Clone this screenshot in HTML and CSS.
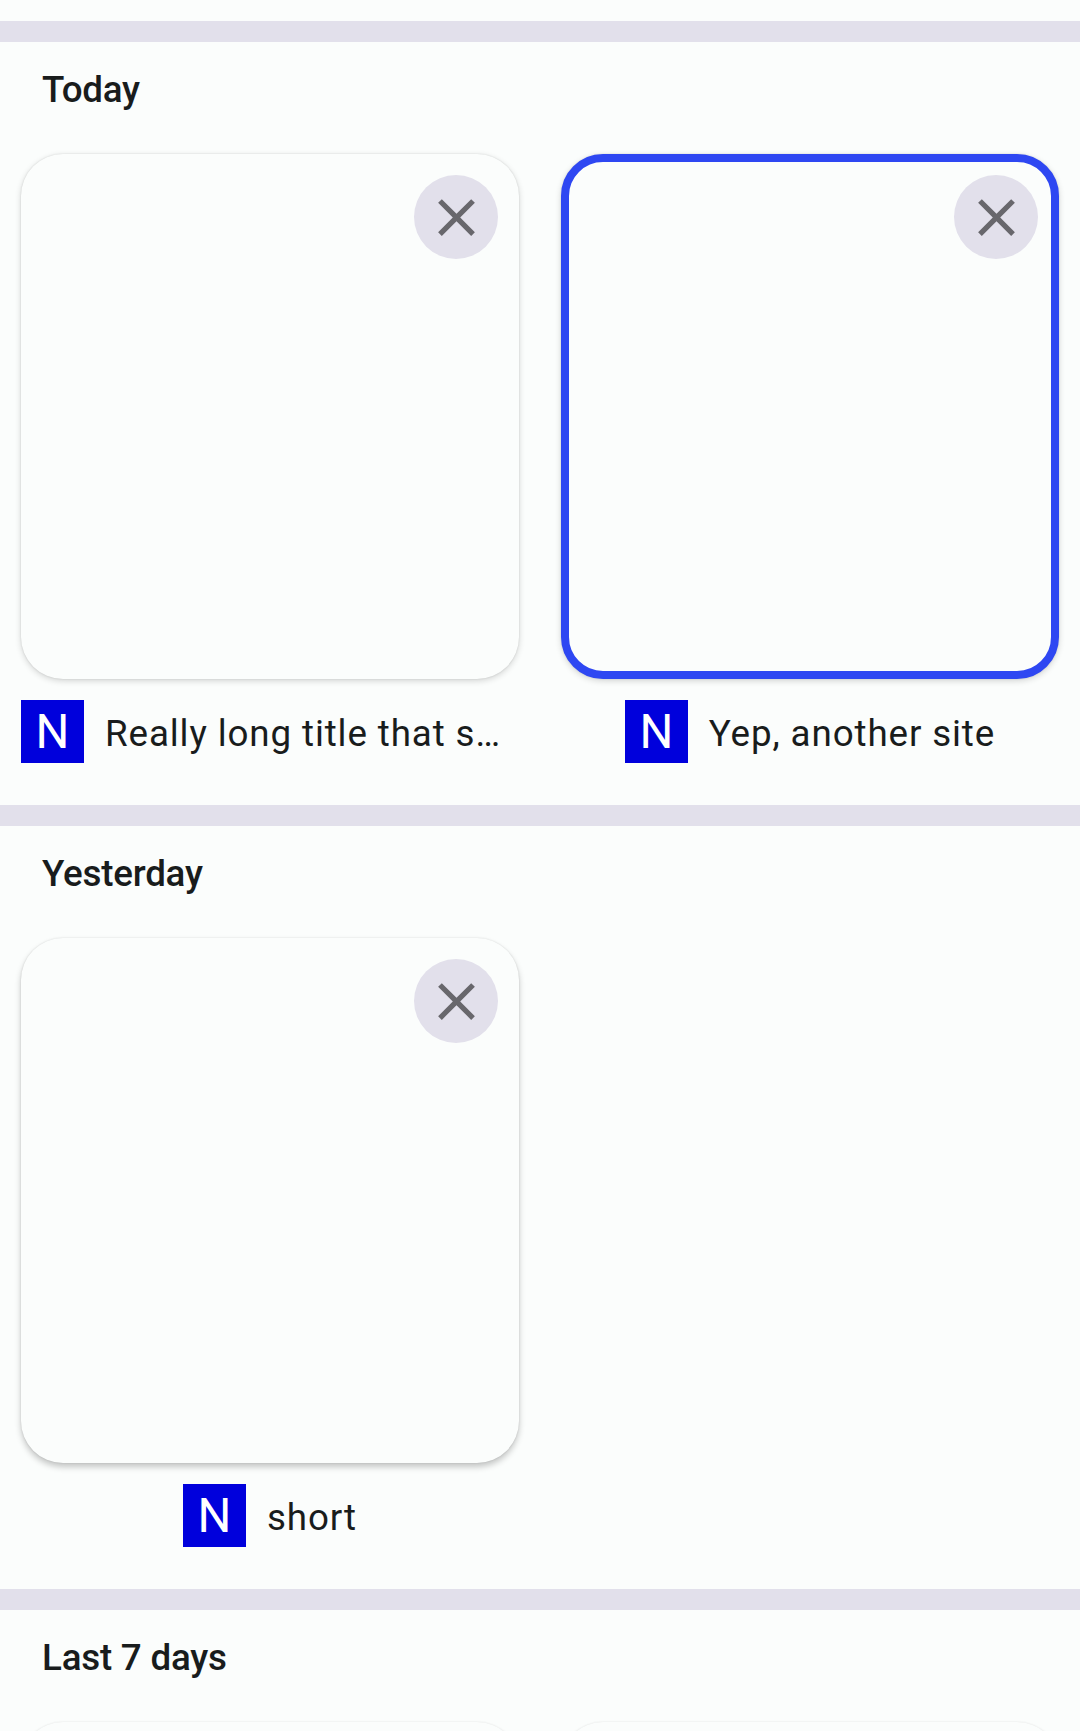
FILE: index.html
```html
<!DOCTYPE html>
<html lang="en">
<head>
<meta charset="utf-8">
<title>Tabs</title>
<link rel="stylesheet" href="styles.css">
</head>
<body>
<main class="tabs">
  <section class="group">
    <h2 class="heading">Today</h2>
    <div class="grid">
      <article class="tab">
        <div class="card"><button class="close" aria-label="Close"><svg viewBox="0 0 24 24"><path d="M19 6.41 17.59 5 12 10.59 6.41 5 5 6.41 10.59 12 5 17.59 6.41 19 12 13.41 17.59 19 19 17.59 13.41 12z"/></svg></button></div>
        <div class="caption"><span class="icon">N</span><span class="title title-full">Really long title that s…</span></div>
      </article>
      <article class="tab">
        <div class="card selected"><button class="close" aria-label="Close"><svg viewBox="0 0 24 24"><path d="M19 6.41 17.59 5 12 10.59 6.41 5 5 6.41 10.59 12 5 17.59 6.41 19 12 13.41 17.59 19 19 17.59 13.41 12z"/></svg></button></div>
        <div class="caption"><span class="icon">N</span><span class="title">Yep, another site</span></div>
      </article>
    </div>
  </section>
  <section class="group">
    <h2 class="heading">Yesterday</h2>
    <div class="grid">
      <article class="tab">
        <div class="card low"><button class="close" aria-label="Close"><svg viewBox="0 0 24 24"><path d="M19 6.41 17.59 5 12 10.59 6.41 5 5 6.41 10.59 12 5 17.59 6.41 19 12 13.41 17.59 19 19 17.59 13.41 12z"/></svg></button></div>
        <div class="caption"><span class="icon">N</span><span class="title">short</span></div>
      </article>
    </div>
  </section>
  <section class="group">
    <h2 class="heading">Last 7 days</h2>
    <div class="grid">
      <article class="tab"><div class="card lowest"></div></article>
      <article class="tab"><div class="card lowest"></div></article>
    </div>
  </section>
</main>
</body>
</html>
```
FILE: styles.css
```css
* { box-sizing: border-box; }
body {
  margin: 0;
  background: #fbfdfc;
  color: #191c1c;
  font-family: Roboto, sans-serif;
}
.tabs {
  height: 1731px;
  padding-top: 21px;
  overflow: hidden;
}
.group {
  border-top: 21px solid #e2e0eb;
  height: 784px;
}
.heading {
  margin: 0;
  padding: 27px 42px 0;
  height: 112px;
  font-size: 36.75px;
  line-height: 42px;
  font-weight: 500;
  letter-spacing: -0.22px;
}
.grid {
  display: grid;
  grid-template-columns: 498px 498px;
  gap: 42px;
  padding: 0 21px;
}
.tab { min-width: 0; }
.card {
  display: flex;
  justify-content: flex-end;
  align-items: flex-start;
  height: 525px;
  padding: 21px;
  border-radius: 42px;
  background: #fbfdfc;
  box-shadow: 0 2px 6px rgba(0, 0, 0, .16), 0 0 2px rgba(0, 0, 0, .12);
}
.selected {
  border: 8px solid #2e47f2;
  padding: 13px;
}
.low { box-shadow: 0 4px 6px rgba(0, 0, 0, .22), 0 0 2px rgba(0, 0, 0, .12); }
.lowest { box-shadow: 0 5px 6px rgba(0, 0, 0, .2), 0 0 2px rgba(0, 0, 0, .1); }
.close {
  display: flex;
  align-items: center;
  justify-content: center;
  width: 84px;
  height: 84px;
  padding: 0;
  border: 0;
  border-radius: 50%;
  background: #e2e0eb;
}
.close svg {
  width: 63px;
  height: 63px;
  fill: #68676c;
}
.caption {
  display: flex;
  align-items: center;
  justify-content: center;
  gap: 21px;
  margin-top: 21px;
  height: 63px;
}
.icon {
  flex: none;
  width: 63px;
  height: 63px;
  background: #0000dc;
  color: #fff;
  font-size: 47.5px;
  line-height: 65px;
  text-align: center;
}
.title {
  padding-top: 5px;
  white-space: nowrap;
  font-size: 36.75px;
  line-height: 52px;
  letter-spacing: .88px;
}
.title-full { flex: 1; }
```
